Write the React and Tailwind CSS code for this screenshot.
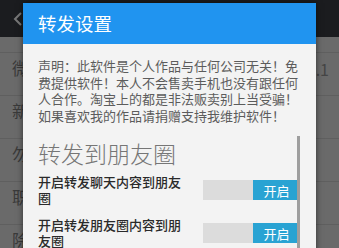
import React from 'react';

const rows = ['微信', '新消息', '勿扰', '职位', '除外'];

const Toggle = () => (
    <div className="flex h-[20px] w-[97px] shrink-0">
        <div className="w-[50px] bg-[#dcdcdc]" />
        <div className="flex flex-1 items-center justify-center bg-[#29a3d3] text-[13px] leading-none text-white">
            开启
        </div>
    </div>
);

const App = () => {
    return (
        <div className="relative h-[248px] w-[339px] overflow-hidden bg-[#6a6a6a] font-['Noto_Sans_CJK_SC',sans-serif]">
            {/* 背景页面 */}
            <div className="flex h-[37px] items-center bg-[#1b1c1f] pl-[13px]">
                <svg width="10" height="14" viewBox="0 0 10 14" fill="none">
                    <polyline points="8,1 2,7 8,13" stroke="#777" strokeWidth="2" />
                </svg>
            </div>
            <div className="h-[16px] border-b border-[#5f5f5f]" />
            {rows.map((r, i) => (
                <div key={r} className="flex h-[43px] justify-between border-b border-[#5f5f5f] pl-[12px] pr-[10px] pt-[6px]">
                    <span className="text-[17px] leading-[17px] text-[#3a3a3a]">{r}</span>
                    {i === 0 && <span className="pt-[2px] text-[16px] leading-[17px] text-[#454545]">v1.1</span>}
                </div>
            ))}

            {/* 对话框 */}
            <div className="absolute left-[23px] top-[3px] w-[293px] bg-[#f3f3f3] shadow-[0_0_6px_rgba(0,0,0,0.55)]">
                <div className="flex h-[41px] items-center bg-[#2094f0] pl-[15px] text-[18.5px] text-white">
                    转发设置
                </div>
                <div className="relative pl-[15px] pr-[16px] pt-[14px] pb-[20px]">
                    <p className="text-[13px] leading-[16.7px] text-[#5c5c5c]">
                        声明：此软件是个人作品与任何公司无关！免费提供软件！本人不会售卖手机也没有跟任何人合作。淘宝上的都是非法贩卖别上当受骗！如果喜欢我的作品请捐赠支持我维护软件！
                    </p>
                    <h2 className="mt-[14px] text-[23px] font-light leading-[28px] text-[#767676]">转发到朋友圈</h2>
                    <div className="mt-[7px] flex flex-col gap-[10px]">
                        <div className="flex items-center justify-between">
                            <span className="w-[150px] text-[13px] font-medium leading-[16.5px] text-[#2a2a2a]">开启转发聊天内容到朋友圈</span>
                            <Toggle />
                        </div>
                        <div className="flex items-center justify-between">
                            <span className="w-[150px] text-[13px] font-medium leading-[16.5px] text-[#2a2a2a]">开启转发朋友圈内容到朋友圈</span>
                            <Toggle />
                        </div>
                    </div>
                    <div className="absolute bottom-0 left-[274px] top-[92px] w-[2.5px] bg-[#9e9e9e]" />
                </div>
            </div>
        </div>
    );
};

export default App;
